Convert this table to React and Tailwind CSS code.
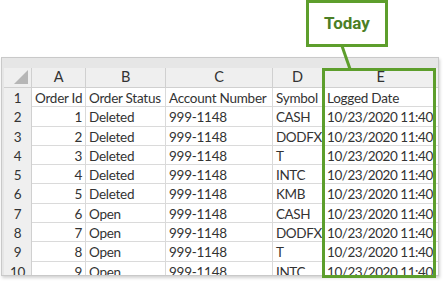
import React from "react";

const rows = [
  [1, "Deleted", "999-1148", "CASH"],
  [2, "Deleted", "999-1148", "DODFX"],
  [3, "Deleted", "999-1148", "T"],
  [4, "Deleted", "999-1148", "INTC"],
  [5, "Deleted", "999-1148", "KMB"],
  [6, "Open", "999-1148", "CASH"],
  [7, "Open", "999-1148", "DODFX"],
  [8, "Open", "999-1148", "T"],
  [9, "Open", "999-1148", "INTC"],
];

const cols = "grid grid-cols-[28px_54px_80px_107px_50px_116px]";

export default function App() {
  return (
    <div className="relative w-[448px] h-[291px] bg-white overflow-hidden font-['Lato',sans-serif] text-[13.5px] tracking-[-0.25px] text-[#333]">
      {/* Sheet */}
      <div className="ml-[1px] mt-[57px] w-[438px] h-[219px] border border-[#c9c9c9] bg-[#e6e6e6] shadow-[1px_2px_3px_rgba(0,0,0,0.18)] overflow-hidden">
        <div className="ml-[2px] mt-[10px] bg-white">
          {/* column letters */}
          <div className={`${cols} h-[20px] bg-[#efefef] border-b border-[#d0d0d0] text-[14.5px]`}>
            <div className="relative border-r border-[#d0d0d0]">
              <div className="absolute right-[3px] bottom-[3px] w-0 h-0 border-l-[14px] border-l-transparent border-b-[14px] border-b-[#b6b6b6]" />
            </div>
            {["A", "B", "C", "D", "E"].map((c) => (
              <div key={c} className="flex items-center justify-center border-r border-[#d0d0d0] leading-none">
                {c}
              </div>
            ))}
          </div>
          {/* header row */}
          <div className={`${cols} h-[19.3px] border-b border-[#dadada]`}>
            <div className="flex items-center justify-center bg-[#efefef] border-r border-[#d0d0d0]">1</div>
            <div className="flex items-center px-[3px] border-r border-[#dadada] whitespace-nowrap overflow-hidden">Order Id</div>
            <div className="flex items-center px-[3px] border-r border-[#dadada] whitespace-nowrap overflow-hidden">Order Status</div>
            <div className="flex items-center px-[3px] border-r border-[#dadada] whitespace-nowrap overflow-hidden">Account Number</div>
            <div className="flex items-center px-[3px] border-r border-[#dadada] whitespace-nowrap overflow-hidden">Symbol</div>
            <div className="flex items-center pl-[4px] whitespace-nowrap overflow-hidden">Logged Date</div>
          </div>
          {rows.map((r, i) => (
            <div key={i} className={`${cols} h-[19.3px] border-b border-[#dadada]`}>
              <div className="flex items-center justify-center bg-[#efefef] border-r border-[#d0d0d0]">{i + 2}</div>
              <div className="flex items-center justify-end px-[3px] border-r border-[#dadada]">{r[0]}</div>
              <div className="flex items-center px-[3px] border-r border-[#dadada]">{r[1]}</div>
              <div className="flex items-center px-[3px] border-r border-[#dadada]">{r[2]}</div>
              <div className="flex items-center px-[3px] border-r border-[#dadada] tracking-[-0.4px]">{r[3]}</div>
              <div className="flex items-center pl-[4px] whitespace-nowrap overflow-hidden tracking-[-0.45px]">10/23/2020 11:40</div>
            </div>
          ))}
        </div>
      </div>

      {/* Highlight on column E */}
      <div className="absolute left-[322px] top-[68px] w-[114px] h-[210px] border-[3px] border-[#5d9e2c]" />

      {/* Connector */}
      <svg className="absolute left-0 top-0" width="448" height="291">
        <line x1="342" y1="46" x2="350" y2="69" stroke="#5d9e2c" strokeWidth="3" />
      </svg>

      {/* Callout */}
      <div className="absolute left-[306px] top-0 w-[82px] h-[47px] border-[3px] border-[#5d9e2c] bg-white flex items-center justify-center">
        <span className="font-['Roboto',sans-serif] font-bold text-[17px] tracking-normal text-[#4c7f25]">Today</span>
      </div>
    </div>
  );
}
